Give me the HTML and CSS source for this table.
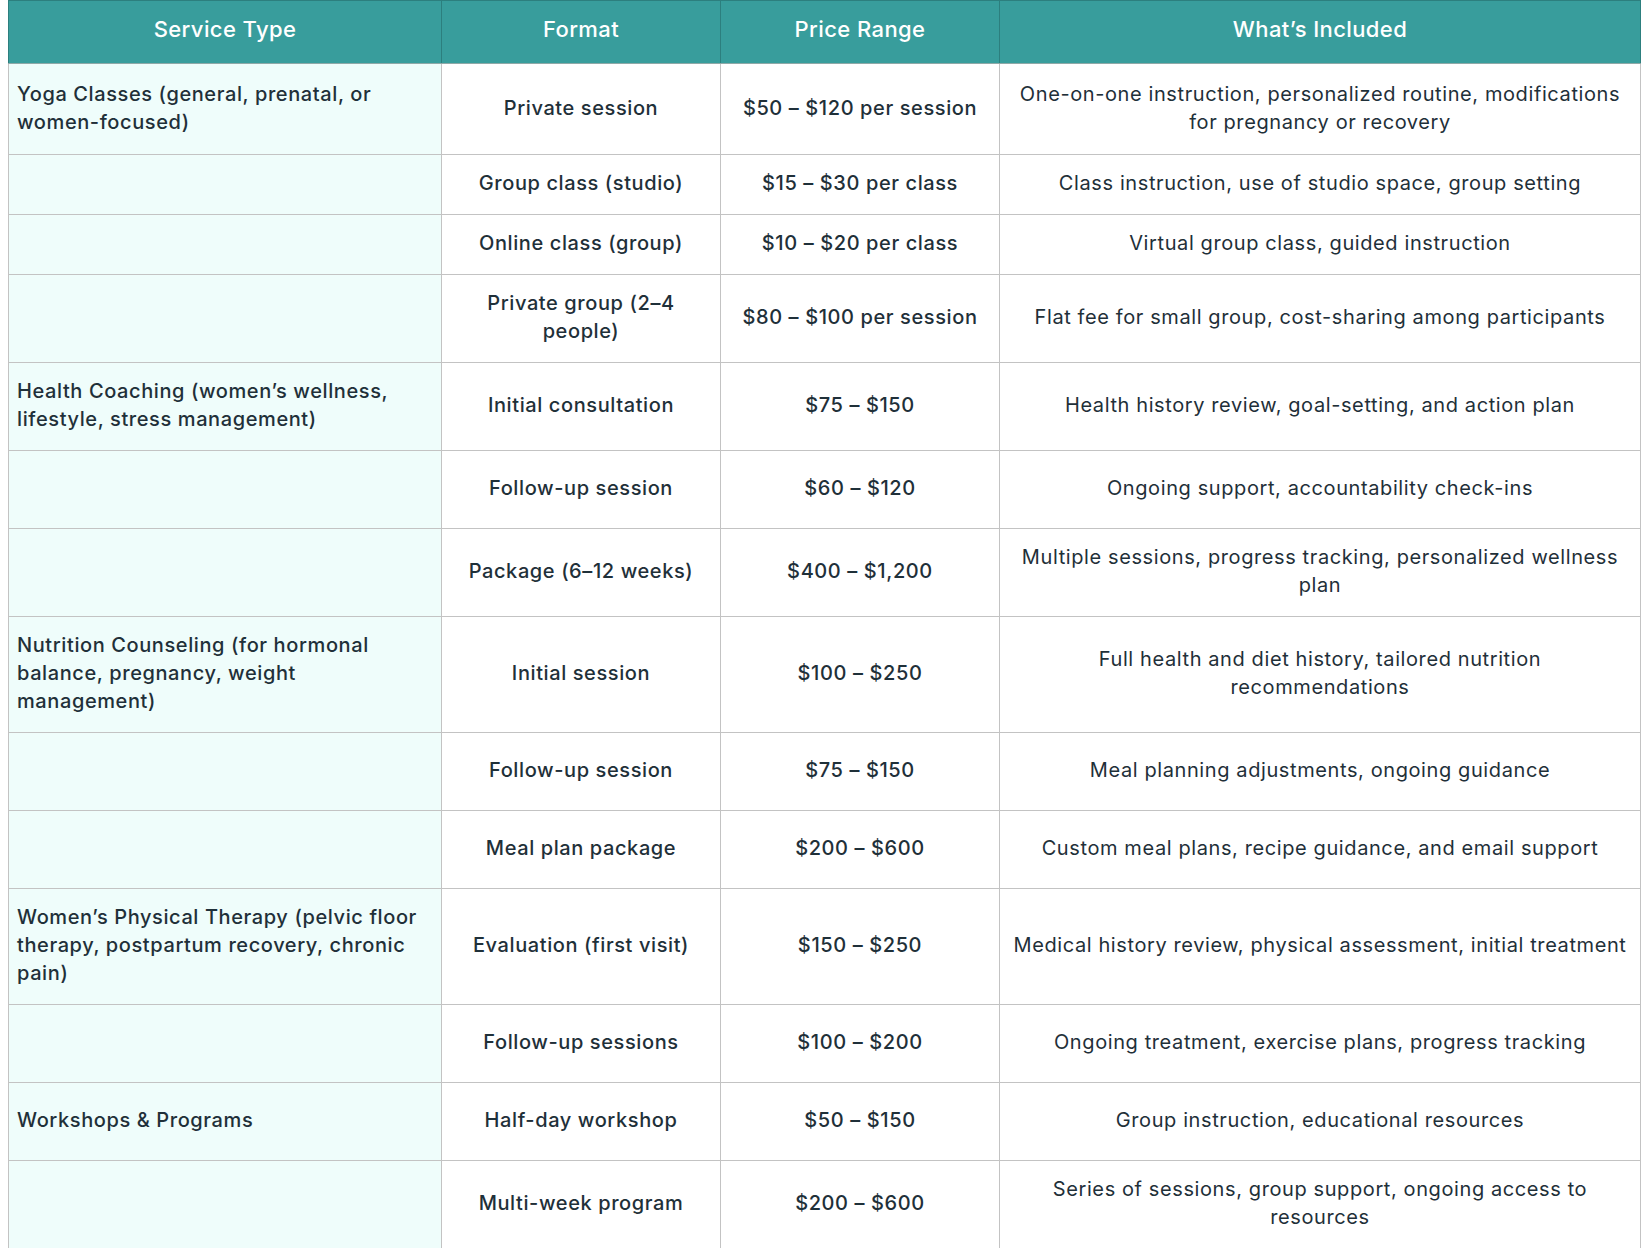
FILE: index.html
```html
<!DOCTYPE html>
<html lang="en">
<head>
<meta charset="utf-8">
<title>Women's Wellness Services Pricing</title>
<link rel="stylesheet" href="styles.css">
</head>
<body>
<table class="pricing">
  <colgroup>
    <col class="c-service">
    <col class="c-format">
    <col class="c-price">
    <col class="c-included">
  </colgroup>
  <thead>
    <tr class="head-row">
      <th>Service Type</th>
      <th>Format</th>
      <th>Price Range</th>
      <th>What’s Included</th>
    </tr>
  </thead>
  <tbody>
    <tr class="first">
      <td class="service">Yoga Classes (general, prenatal, or women-focused)</td>
      <td class="format">Private session</td>
      <td class="price">$50 – $120 per session</td>
      <td class="included">One-on-one instruction, personalized routine, modifications for pregnancy or recovery</td>
    </tr>
    <tr>
      <td class="service"></td>
      <td class="format">Group class (studio)</td>
      <td class="price">$15 – $30 per class</td>
      <td class="included">Class instruction, use of studio space, group setting</td>
    </tr>
    <tr>
      <td class="service"></td>
      <td class="format">Online class (group)</td>
      <td class="price">$10 – $20 per class</td>
      <td class="included">Virtual group class, guided instruction</td>
    </tr>
    <tr>
      <td class="service"></td>
      <td class="format">Private group (2–4 people)</td>
      <td class="price">$80 – $100 per session</td>
      <td class="included">Flat fee for small group, cost-sharing among participants</td>
    </tr>
    <tr>
      <td class="service">Health Coaching (women’s wellness, lifestyle, stress management)</td>
      <td class="format">Initial consultation</td>
      <td class="price">$75 – $150</td>
      <td class="included">Health history review, goal-setting, and action plan</td>
    </tr>
    <tr class="tall">
      <td class="service"></td>
      <td class="format">Follow-up session</td>
      <td class="price">$60 – $120</td>
      <td class="included">Ongoing support, accountability check-ins</td>
    </tr>
    <tr>
      <td class="service"></td>
      <td class="format">Package (6–12 weeks)</td>
      <td class="price">$400 – $1,200</td>
      <td class="included">Multiple sessions, progress tracking, personalized wellness plan</td>
    </tr>
    <tr>
      <td class="service">Nutrition Counseling (for hormonal balance, pregnancy, weight management)</td>
      <td class="format">Initial session</td>
      <td class="price">$100 – $250</td>
      <td class="included">Full health and diet history, tailored nutrition recommendations</td>
    </tr>
    <tr class="tall">
      <td class="service"></td>
      <td class="format">Follow-up session</td>
      <td class="price">$75 – $150</td>
      <td class="included">Meal planning adjustments, ongoing guidance</td>
    </tr>
    <tr class="tall">
      <td class="service"></td>
      <td class="format">Meal plan package</td>
      <td class="price">$200 – $600</td>
      <td class="included">Custom meal plans, recipe guidance, and email support</td>
    </tr>
    <tr>
      <td class="service">Women’s Physical Therapy (pelvic floor therapy, postpartum recovery, chronic pain)</td>
      <td class="format">Evaluation (first visit)</td>
      <td class="price">$150 – $250</td>
      <td class="included">Medical history review, physical assessment, initial treatment</td>
    </tr>
    <tr class="tall">
      <td class="service"></td>
      <td class="format">Follow-up sessions</td>
      <td class="price">$100 – $200</td>
      <td class="included">Ongoing treatment, exercise plans, progress tracking</td>
    </tr>
    <tr class="tall">
      <td class="service">Workshops &amp; Programs</td>
      <td class="format">Half-day workshop</td>
      <td class="price">$50 – $150</td>
      <td class="included">Group instruction, educational resources</td>
    </tr>
    <tr>
      <td class="service"></td>
      <td class="format">Multi-week program</td>
      <td class="price">$200 – $600</td>
      <td class="included">Series of sessions, group support, ongoing access to resources</td>
    </tr>
  </tbody>
</table>
</body>
</html>
```

FILE: styles.css
```css
html, body {
  margin: 0;
  padding: 0;
  background: #ffffff;
}

body {
  padding-left: 8px;
  font-family: Inter, "Noto Sans", "Liberation Sans", sans-serif;
  color: #1f3039;
}

.pricing {
  width: 1632px;
  table-layout: fixed;
  border-collapse: collapse;
  font-size: 20px;
  line-height: 28px;
  letter-spacing: 0.6px;
}

.c-service { width: 433px; }
.c-format { width: 279px; }
.c-price { width: 279px; }
.c-included { width: 641px; }

.head-row {
  height: 63px;
}

.head-row th {
  background: #389d9c;
  color: #ffffff;
  font-size: 22px;
  font-weight: 500;
  letter-spacing: 0.4px;
  text-align: center;
  vertical-align: middle;
  padding: 0 12px 6px;
  border: 1px solid #2c7f7e;
  border-bottom: 1px solid #8fa9a8;
}

.pricing td {
  border: 1px solid #c3c3c3;
  padding: 14px 12px 17px;
  vertical-align: middle;
  text-align: center;
}

.pricing tr.first td {
  padding-top: 16px;
  padding-bottom: 18px;
}

.pricing tr.tall {
  height: 78px;
}

.pricing td.service {
  background: #effdfb;
  text-align: left;
  font-weight: 500;
  padding-left: 8px;
}

.pricing td.format {
  font-weight: 500;
}

.pricing td.price {
  font-weight: 500;
}

.pricing td.included {
  font-weight: 400;
}
```
